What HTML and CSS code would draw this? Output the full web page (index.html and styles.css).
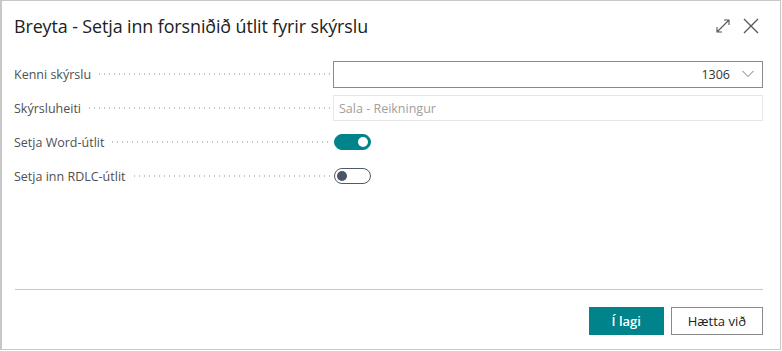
FILE: index.html
```html
<!DOCTYPE html>
<html lang="is">
<head>
  <meta charset="UTF-8">
  <meta name="viewport" content="width=device-width, initial-scale=1.0">
  <title>Breyta - Setja inn forsniðið útlit fyrir skýrslu</title>
  <link rel="stylesheet" href="styles.css">
</head>
<body>
  <div class="dialog">
    <div class="dialog-header">
      <h1 class="dialog-title">Breyta - Setja inn forsniðið útlit fyrir skýrslu</h1>
      <div class="header-actions">
        <button type="button" class="icon-btn" title="Stækka">
          <svg width="16" height="16" viewBox="0 0 16 16" fill="none" stroke="#555" stroke-width="1.1">
            <path d="M2 14L14 2M9 2h5v5M2 9v5h5"/>
          </svg>
        </button>
        <button type="button" class="icon-btn" title="Loka">
          <svg width="16" height="16" viewBox="0 0 16 16" fill="none" stroke="#555" stroke-width="1.3">
            <path d="M1 1L15 15M15 1L1 15"/>
          </svg>
        </button>
      </div>
    </div>

    <div class="dialog-body">
      <div class="field-row">
        <label class="field-label"><span>Kenni skýrslu</span></label>
        <div class="select-box">
          <span class="select-value">1306</span>
          <svg class="chevron" width="12" height="8" viewBox="0 0 12 8" fill="none" stroke="#777" stroke-width="1">
            <path d="M0.5 1L6 6.5L11.5 1"/>
          </svg>
        </div>
      </div>
      <div class="field-row">
        <label class="field-label"><span>Skýrsluheiti</span></label>
        <div class="text-box readonly">Sala - Reikningur</div>
      </div>
      <div class="field-row">
        <label class="field-label"><span>Setja Word-útlit</span></label>
        <div class="toggle on"><span class="knob"></span></div>
      </div>
      <div class="field-row">
        <label class="field-label"><span>Setja inn RDLC-útlit</span></label>
        <div class="toggle"><span class="knob"></span></div>
      </div>
    </div>

    <div class="dialog-footer">
      <button type="button" class="btn btn-primary">Í lagi</button>
      <button type="button" class="btn">Hætta við</button>
    </div>
  </div>
</body>
</html>
```

FILE: styles.css
```css
* {
  margin: 0;
  padding: 0;
  box-sizing: border-box;
}
body {
  font-family: 'Open Sans', 'Noto Sans', sans-serif;
  background-color: #ffffff;
  color: #212121;
}
.dialog {
  width: 781px;
  height: 350px;
  border: 1px solid #c8c8c8;
  border-left-width: 2px;
  background-color: #fff;
  display: flex;
  flex-direction: column;
  padding: 0 17px 0 12px;
}
.dialog-header {
  display: flex;
  align-items: center;
  justify-content: space-between;
  height: 48px;
  padding-top: 2px;
}
.dialog-title {
  font-size: 17.9px;
  font-weight: 400;
  color: #212121;
  letter-spacing: -0.1px;
}
.header-actions {
  display: flex;
  gap: 12px;
  margin-right: 4px;
}
.icon-btn {
  border: none;
  background: none;
  width: 16px;
  height: 16px;
  cursor: pointer;
  display: flex;
}
.dialog-body {
  flex: 1;
  padding-top: 8px;
}
.field-row {
  display: grid;
  grid-template-columns: 317px 1fr;
  column-gap: 2px;
  align-items: center;
  height: 34px;
}
.field-label {
  display: flex;
  align-items: center;
  font-size: 12.5px;
  color: #505050;
}
.field-label::after {
  content: "";
  flex: 1;
  height: 2px;
  margin-left: 6px;
  background-image: radial-gradient(circle, #c4c4c4 0.7px, transparent 1px);
  background-size: 5px 2px;
  background-repeat: repeat-x;
}
.select-box {
  display: flex;
  align-items: center;
  justify-content: flex-end;
  height: 27px;
  border: 1px solid #8a8a8a;
  padding: 0 8px;
  font-size: 12.5px;
  color: #333;
}
.select-value {
  margin-right: 12px;
}
.text-box {
  height: 26px;
  border: 1px solid #e6e6e6;
  display: flex;
  align-items: center;
  padding: 0 5px;
  font-size: 12.5px;
  color: #a0a0a0;
}
.toggle {
  position: relative;
  width: 37px;
  height: 16px;
  border-radius: 8px;
  border: 1.5px solid #4f5a6b;
  margin-left: 1px;
  background: #fff;
}
.toggle .knob {
  position: absolute;
  top: 1.5px;
  left: 2px;
  width: 10px;
  height: 10px;
  border-radius: 50%;
  background: #4a5468;
}
.toggle.on {
  background: #00838a;
  border-color: #00838a;
}
.toggle.on .knob {
  left: auto;
  right: 2px;
  background: #fff;
}
.dialog-footer {
  display: flex;
  justify-content: flex-end;
  gap: 7px;
  border-top: 1px solid #c8c8c8;
  margin-left: 1px;
  padding: 17px 0 14px;
}
.btn {
  height: 28px;
  min-width: 75px;
  padding: 0 16px;
  border: 1px solid #8a8a8a;
  background: #fff;
  font-family: inherit;
  font-size: 13px;
  color: #212121;
  cursor: pointer;
}
.btn-primary {
  background: #00838a;
  border-color: #00838a;
  color: #fff;
  font-weight: 600;
}
```
